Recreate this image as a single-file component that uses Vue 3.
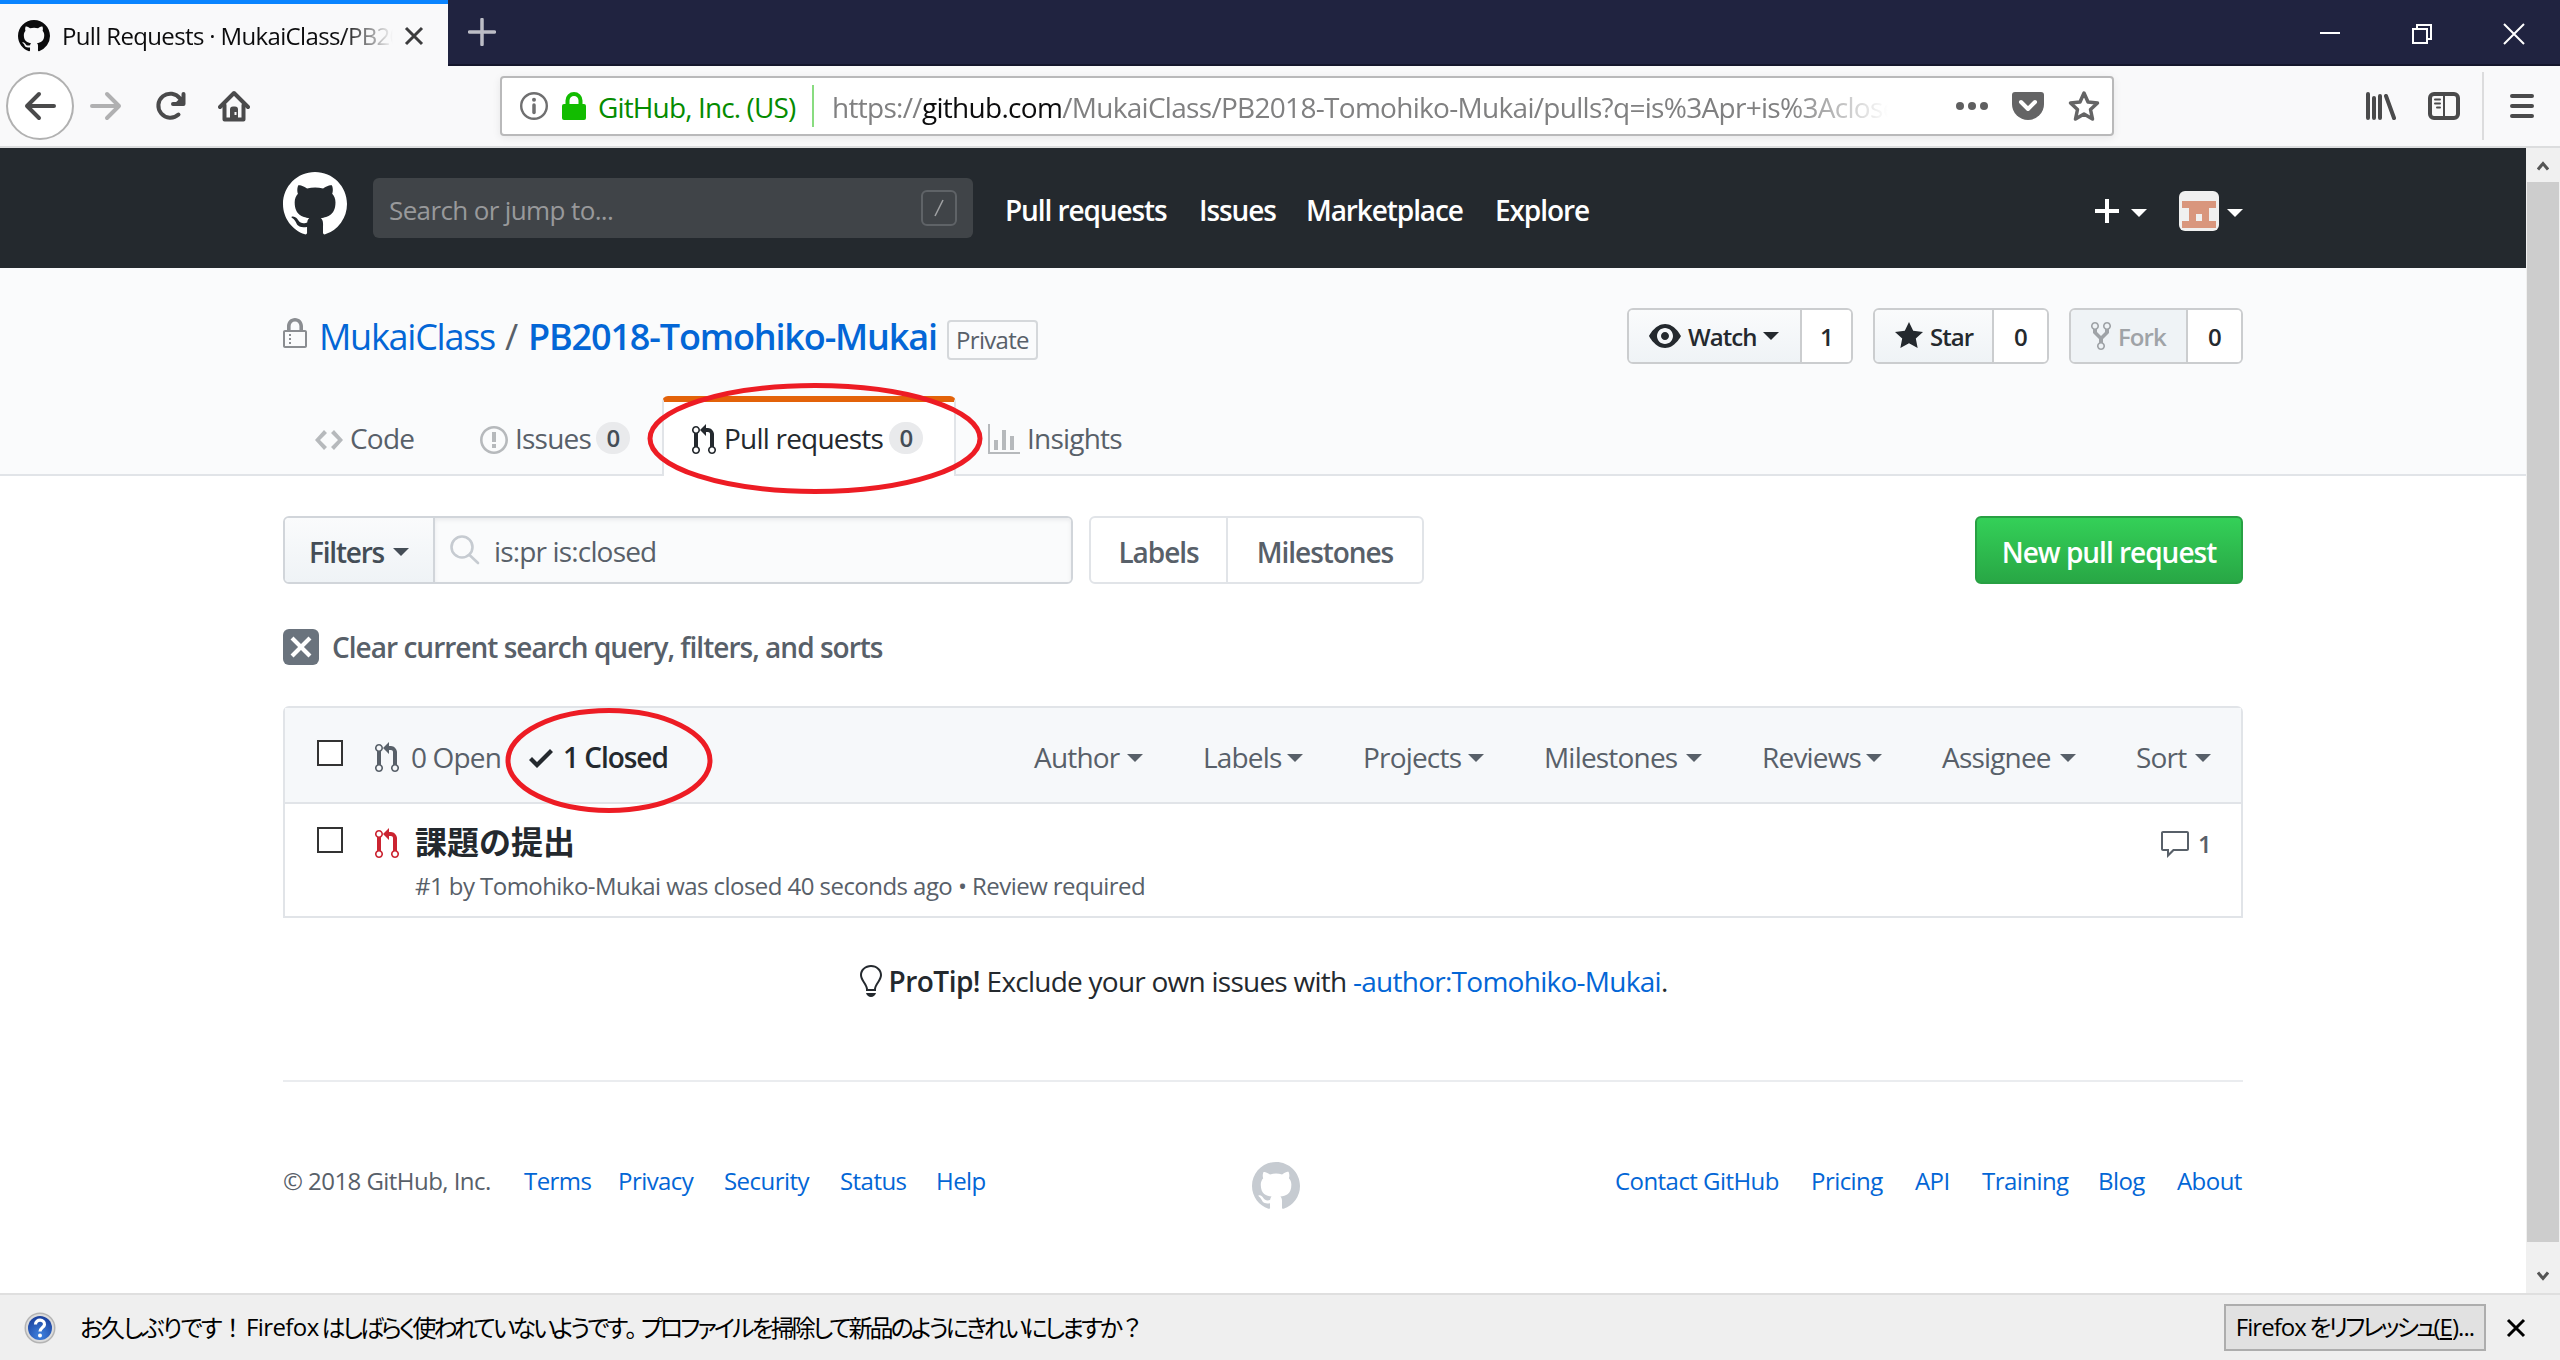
<script setup>
import { h } from 'vue'

const shapes = {
  github: [16, 'M8 0C3.58 0 0 3.58 0 8c0 3.54 2.29 6.53 5.47 7.59.4.07.55-.17.55-.38 0-.19-.01-.82-.01-1.49-2.01.37-2.53-.49-2.69-.94-.09-.23-.48-.94-.82-1.13-.28-.15-.68-.52-.01-.53.63-.01 1.08.58 1.23.82.72 1.21 1.87.87 2.33.66.07-.52.28-.87.51-1.07-1.78-.2-3.64-.89-3.64-3.95 0-.87.31-1.59.82-2.15-.08-.2-.36-1.02.08-2.12 0 0 .67-.21 2.2.82.64-.18 1.32-.27 2-.27.68 0 1.36.09 2 .27 1.53-1.04 2.2-.82 2.2-.82.44 1.1.16 1.92.08 2.12.51.56.82 1.27.82 2.15 0 3.07-1.87 3.75-3.65 3.95.29.25.54.73.54 1.48 0 1.07-.01 1.93-.01 2.2 0 .21.15.46.55.38A8.013 8.013 0 0 0 16 8c0-4.42-3.58-8-8-8z'],
  lock: [12, 'M4 13H3v-1h1v1zm8-6v7c0 .55-.45 1-1 1H1c-.55 0-1-.45-1-1V7c0-.55.45-1 1-1h1V4c0-2.2 1.8-4 4-4s4 1.8 4 4v2h1c.55 0 1 .45 1 1zM3.8 6h4.41V4c0-1.22-.98-2.2-2.2-2.2-1.22 0-2.2.98-2.2 2.2v2H3.8zM11 7H1v7h10V7zM4 8H3v1h1V8zm0 2H3v1h1v-1z'],
  pull: [12, 'M11 11.28V5c-.03-.78-.34-1.47-.94-2.06C9.46 2.35 8.78 2.03 8 2H7V0L4 3l3 3V4h1c.27.02.48.11.69.31.21.2.3.42.31.69v6.28A1.993 1.993 0 0 0 10 15a1.993 1.993 0 0 0 1-3.72zm-1 2.92c-.66 0-1.2-.55-1.2-1.2 0-.65.55-1.2 1.2-1.2.65 0 1.2.55 1.2 1.2 0 .65-.55 1.2-1.2 1.2zM4 3c0-1.11-.89-2-2-2a1.993 1.993 0 0 0-1 3.72v6.56A1.993 1.993 0 0 0 2 15a1.993 1.993 0 0 0 1-3.72V4.720c.59-.34 1-.98 1-1.720zm-.8 10c0 .66-.55 1.2-1.2 1.2-.65 0-1.2-.55-1.2-1.2 0-.65.55-1.2 1.2-1.2.65 0 1.2.55 1.2 1.2zM2 4.2C1.34 4.2.8 3.65.8 3c0-.65.55-1.2 1.2-1.2.65 0 1.2.55 1.2 1.2 0 .65-.55 1.2-1.2 1.2z'],
  eye: [16, 'M8.06 2C3 2 0 8 0 8s3 6 8.06 6C13 14 16 8 16 8s-3-6-7.94-6zM8 12c-2.2 0-4-1.78-4-4 0-2.2 1.8-4 4-4 2.22 0 4 1.8 4 4 0 2.22-1.78 4-4 4zm2-4c0 1.11-.89 2-2 2-1.11 0-2-.89-2-2 0-1.11.89-2 2-2 1.11 0 2 .89 2 2z'],
  star: [14, 'M14 6l-4.9-.64L7 1 4.9 5.36 0 6l3.6 3.26L2.67 14 7 11.67 11.33 14l-.93-4.74L14 6z'],
  fork: [10, 'M8 1a1.993 1.993 0 0 0-1 3.72V6L5 8 3 6V4.72A1.993 1.993 0 0 0 2 1a1.993 1.993 0 0 0-1 3.72V6.5l3 3v1.78A1.993 1.993 0 0 0 5 15a1.993 1.993 0 0 0 1-3.72V9.5l3-3V4.72A1.993 1.993 0 0 0 8 1zM2 4.2C1.34 4.2.8 3.65.8 3c0-.65.55-1.2 1.2-1.2.65 0 1.2.55 1.2 1.2 0 .65-.55 1.2-1.2 1.2zm3 10c-.66 0-1.2-.55-1.2-1.2 0-.65.55-1.2 1.2-1.2.65 0 1.2.55 1.2 1.2 0 .65-.55 1.2-1.2 1.2zm3-10c-.66 0-1.2-.55-1.2-1.2 0-.65.55-1.2 1.2-1.2.65 0 1.2.55 1.2 1.2 0 .65-.55 1.2-1.2 1.2z'],
  code: [14, 'M9.5 3L8 4.5 11.5 8 8 11.5 9.5 13 14 8 9.5 3zm-5 0L0 8l4.5 5L6 11.5 2.5 8 6 4.5 4.5 3z'],
  issue: [14, 'M7 2.3c3.14 0 5.7 2.56 5.7 5.7s-2.56 5.7-5.7 5.7A5.71 5.71 0 0 1 1.3 8c0-3.14 2.56-5.7 5.7-5.7zM7 1C3.14 1 0 4.14 0 8s3.14 7 7 7 7-3.14 7-7-3.14-7-7-7zm1 3H6v5h2V4zm0 6H6v2h2v-2z'],
  graph: [16, 'M16 14v1H0V0h1v14h15zM5 13H3V8h2v5zm4 0H7V3h2v10zm4 0h-2V6h2v7z'],
  check: [12, 'M12 5l-8 8-4-4 1.5-1.5L4 10l6.5-6.5L12 5z'],
  comment: [16, 'M14 1H2c-.55 0-1 .45-1 1v8c0 .55.45 1 1 1h2v3.5L7.5 11H14c.55 0 1-.45 1-1V2c0-.55-.45-1-1-1zm0 9H7l-2 2v-2H2V2h12v8z'],
  bulb: [12, 'M6.5 0C3.48 0 1 2.19 1 5c0 .92.55 2.25 1 3 1.34 2.25 1.78 2.78 2 4v1h5v-1c.22-1.22.66-1.75 2-4 .45-.75 1-2.08 1-3 0-2.81-2.48-5-5.5-5zm3.64 7.48c-.25.44-.47.8-.67 1.11-.86 1.41-1.25 2.06-1.45 3.23-.02.05-.02.11-.02.17H5c0-.06 0-.13-.02-.17-.2-1.17-.59-1.83-1.45-3.23-.2-.31-.42-.67-.67-1.11C2.44 6.78 2 5.65 2 5c0-2.2 2.02-4 4.5-4 1.22 0 2.36.42 3.22 1.19C10.55 2.94 11 3.94 11 5c0 .66-.44 1.78-.86 2.48zM4 14h5c-.23 1.14-1.3 2-2.5 2s-2.27-.86-2.5-2z'],
  x: [12, 'M7.48 8l3.75 3.75-1.48 1.48L6 9.48l-3.75 3.75-1.48-1.48L4.52 8 .77 4.25l1.48-1.48L6 6.52l3.75-3.75 1.48 1.48L7.48 8z'],
  plus: [12, 'M12 9H7v5H5V9H0V7h5V2h2v5h5v2z'],
}

// Octicon at twice its nominal size; `size` is the height in pixels.
const Icon = ({ name, size = 32 }) => {
  const [w, d] = shapes[name]
  return h('svg', { class: 'icon', viewBox: `0 0 ${w} 16`, width: (w * size) / 16, height: size, fill: 'currentColor' }, [
    h('path', { d, 'fill-rule': 'evenodd' }),
  ])
}
Icon.props = ['name', 'size']

const nav = [
  { label: 'Pull requests', w: 162 },
  { label: 'Issues', w: 75 },
  { label: 'Marketplace', w: 157 },
  { label: 'Explore', w: 96 },
]
const sorts = [
  { label: 'Author', w: 85 },
  { label: 'Labels', w: 76 },
  { label: 'Projects', w: 97 },
  { label: 'Milestones', w: 134 },
  { label: 'Reviews', w: 96 },
  { label: 'Assignee', w: 110 },
  { label: 'Sort', w: 51 },
]
const footLeft = [
  { label: 'Terms', w: 62 },
  { label: 'Privacy', w: 74 },
  { label: 'Security', w: 84 },
  { label: 'Status', w: 64 },
  { label: 'Help', w: 49 },
]
const footRight = [
  { label: 'Contact GitHub', w: 164 },
  { label: 'Pricing', w: 72 },
  { label: 'API', w: 35 },
  { label: 'Training', w: 84 },
  { label: 'Blog', w: 47 },
  { label: 'About', w: 66 },
]
</script>

<template>
  <div class="window">
    <header class="tabbar">
      <div class="tab">
        <Icon name="github" :size="32" class="favicon" />
        <span class="tab-title">Pull Requests · MukaiClass/PB20</span>
        <svg class="tab-close" width="20" height="20" viewBox="0 0 20 20"><path d="M2 2l16 16M18 2L2 18" /></svg>
      </div>
      <svg class="new-tab" width="28" height="28" viewBox="0 0 28 28"><path d="M14 1.5v25M1.5 14h25" /></svg>
      <div class="controls">
        <svg width="20" height="20" viewBox="0 0 20 20"><path d="M0 9h20" stroke-width="2" /></svg>
        <svg width="20" height="20" viewBox="0 0 20 20"><path d="M1 5h14v14H1zM5 5V1h14v14h-4" stroke-width="2" /></svg>
        <svg width="20" height="20" viewBox="0 0 20 20"><path d="M0 0l20 20M20 0L0 20" stroke-width="2" /></svg>
      </div>
    </header>

    <div class="toolbar">
      <div class="back">
        <svg width="32" height="32" viewBox="0 0 32 32"><path d="M15 4L3 16l12 12M3 16h27" /></svg>
      </div>
      <svg class="forward" width="32" height="32" viewBox="0 0 32 32"><path d="M17 4l12 12-12 12M29 16H2" /></svg>
      <svg class="reload" width="32" height="32" viewBox="0 0 32 32">
        <path d="M23.500 24.500A12 12 0 1 1 25 8.500" />
        <path d="M28.500 4v10H18" />
        <path d="M28.500 5v9H19z" class="solid" />
      </svg>
      <svg class="home" width="32" height="32" viewBox="0 0 32 32">
        <path d="M2 17L16 3l14 14" />
        <path d="M6.500 15v14.500h19V15" />
        <path d="M12 30V19.500q0-3 3-3h2q3 0 3 3V30zM16.500 22v3h2v-3z" class="solid" fill-rule="evenodd" />
      </svg>
      <div class="urlbar">
        <svg class="info" width="28" height="28" viewBox="0 0 28 28">
          <circle cx="14" cy="14" r="12.800" />
          <path d="M14 13v7.500" stroke-width="3.500" stroke-linecap="round" />
          <circle cx="14" cy="7.800" r="2" class="dot" />
        </svg>
        <svg class="padlock" width="24" height="28" viewBox="0 0 24 28">
          <path d="M5.500 14V8.500a6.500 6.500 0 0 1 13 0V14" />
          <rect x="0" y="12" width="24" height="16" rx="2" />
        </svg>
        <span class="owner">GitHub, Inc. (US)</span>
        <i class="owner-rule"></i>
        <span class="url">https://<b>github.com</b>/MukaiClass/PB2018-Tomohiko-Mukai/pulls?q=is%3Apr+is%3Aclose</span>
        <svg class="dots" width="32" height="10" viewBox="0 0 32 10"><circle cx="4" cy="5" r="4" /><circle cx="16" cy="5" r="4" /><circle cx="28" cy="5" r="4" /></svg>
        <svg class="pocket" width="32" height="28" viewBox="0 0 32 28">
          <path d="M3 0h26q3 0 3 3v9a16 16 0 0 1-32 0V3q0-3 3-3z" />
          <path d="M9 10l7 7 7-7" class="chevron" />
        </svg>
        <svg class="bookmark" width="32" height="32" viewBox="0 0 32 32"><path d="M16 3l4 9 9.500 1-7 6.500 2 9.500-8.500-5-8.500 5 2-9.500-7-6.500 9.500-1z" /></svg>
      </div>
      <svg class="library" width="30" height="28" viewBox="0 0 30 28"><path d="M2 2v24M8 6v20M14 4v22M20 4l8 22" /></svg>
      <svg class="sidebar-icon" width="32" height="28" viewBox="0 0 32 28">
        <rect x="2" y="2" width="28" height="24" rx="4" stroke-width="4" />
        <path d="M16 3v22" stroke-width="2" />
        <path d="M7 7.500h5M7 11.500h5M9 15.500h3" stroke-width="2" />
      </svg>
      <i class="tool-rule"></i>
      <svg class="menu" width="24" height="24" viewBox="0 0 24 24"><path d="M2 2h20M2 12h20M2 22h20" /></svg>
    </div>

    <div class="viewport">
      <main class="page">
        <div class="gh-header">
          <Icon name="github" :size="64" />
          <div class="jump"><span>Search or jump to...</span><kbd><svg width="10" height="18" viewBox="0 0 10 18"><path d="M9 1L1 17" /></svg></kbd></div>
          <nav>
            <a v-for="n in nav" :key="n.label" :style="{ width: n.w + 'px' }">{{ n.label }}</a>
          </nav>
          <Icon name="plus" :size="32" class="add" />
          <i class="caret add-caret"></i>
          <svg class="avatar" width="40" height="40" viewBox="0 0 40 40">
            <rect width="40" height="40" rx="6" fill="#f0f0f0" />
            <path d="M3 10h34v7h-7v13h7v7H3v-7h7V17H3zM17 23v7h6v-7z" fill="#d9967d" fill-rule="evenodd" />
          </svg>
          <i class="caret"></i>
        </div>

        <section class="repo-head">
          <div class="repo-row">
            <Icon name="lock" :size="32" class="repo-lock" />
            <a class="repo-owner">MukaiClass</a>
            <span class="repo-slash">/</span>
            <a class="repo-name">PB2018-Tomohiko-Mukai</a>
            <span class="private">Private</span>
            <div class="social">
              <div class="pair">
                <button class="w173"><Icon name="eye" /><span class="l-watch">Watch</span><i class="caret"></i></button><a class="w51">1</a>
              </div>
              <div class="pair">
                <button class="w119"><Icon name="star" /><span>Star</span></button><a class="w55">0</a>
              </div>
              <div class="pair">
                <button class="w117 off"><Icon name="fork" /><span>Fork</span></button><a class="w55">0</a>
              </div>
            </div>
          </div>
          <div class="tabs">
            <a class="t-code"><Icon name="code" /><span>Code</span></a>
            <a class="t-issues"><Icon name="issue" /><span>Issues</span><em>0</em></a>
            <a class="t-pulls"><Icon name="pull" /><span>Pull requests</span><em>0</em></a>
            <a class="t-insights"><Icon name="graph" /><span>Insights</span></a>
          </div>
        </section>

        <section class="content">
          <div class="filter-row">
            <div class="filter">
              <button>Filters<i class="caret"></i></button>
              <div class="query">
                <svg width="30" height="30" viewBox="0 0 30 30"><circle cx="12" cy="12" r="10.500" /><path d="M19.500 20l8.500 8" /></svg>
                <span>is:pr is:closed</span>
              </div>
            </div>
            <div class="subnav"><a>Labels</a><a>Milestones</a></div>
            <button class="new-pr">New pull request</button>
          </div>

          <a class="clear"><span class="clear-box"><Icon name="x" :size="32" /></span><span>Clear current search query, filters, and sorts</span></a>

          <div class="list">
            <div class="list-head">
              <i class="box"></i>
              <Icon name="pull" /><span class="open">0 Open</span>
              <Icon name="check" class="dark" /><span class="closed">1 Closed</span>
              <div class="sorts">
                <span v-for="s in sorts" :key="s.label" class="sort"><span :style="{ width: s.w + 'px' }">{{ s.label }}</span><i class="caret"></i></span>
              </div>
            </div>
            <div class="item">
              <i class="box"></i>
              <Icon name="pull" class="red" />
              <div class="item-text">
                <a class="title">課題の提出</a>
                <p>#1 by Tomohiko-Mukai was closed 40 seconds ago • Review required</p>
              </div>
              <div class="comments"><Icon name="comment" /><span>1</span></div>
            </div>
          </div>

          <p class="protip"><Icon name="bulb" /><strong>ProTip!</strong> Exclude your own issues with <a>-author:Tomohiko-Mukai</a>.</p>

          <footer>
            <span class="copy">© 2018 GitHub, Inc.</span>
            <a v-for="f in footLeft" :key="f.label" :style="{ width: f.w + 'px' }">{{ f.label }}</a>
            <Icon name="github" :size="48" class="foot-mark" />
            <a v-for="f in footRight" :key="f.label" :style="{ width: f.w + 'px' }">{{ f.label }}</a>
          </footer>
        </section>

        <svg class="rings" width="1100" height="900" viewBox="0 0 1100 900">
          <ellipse cx="815" cy="290.500" rx="165" ry="53" />
          <ellipse cx="609" cy="612.500" rx="101" ry="50" />
        </svg>
      </main>

      <aside class="scrollbar">
        <svg width="12" height="10" viewBox="0 0 12 10"><path d="M1 8.500l5-6 5 6" /></svg>
        <i class="thumb"></i>
        <svg width="12" height="10" viewBox="0 0 12 10"><path d="M1 1.500l5 6 5-6" /></svg>
      </aside>
    </div>

    <div class="notice">
      <svg class="help" width="32" height="32" viewBox="0 0 32 32">
        <defs>
          <radialGradient id="orb" cx=".5" cy=".8" r=".8"><stop offset="0" stop-color="#3f83e0" /><stop offset="1" stop-color="#1a3f9c" /></radialGradient>
        </defs>
        <circle cx="16" cy="16" r="15.500" fill="#b4b4b4" /><circle cx="16" cy="16" r="14" fill="#dcdcdc" />
        <circle cx="16" cy="16" r="12" fill="url(#orb)" />
        <path d="M11.500 12.500c0-6 9.500-5.500 9 0-.3 3-4.500 3.500-4.500 7" fill="none" stroke="#fff" stroke-width="3.200" />
        <circle cx="16" cy="23.500" r="2" fill="#fff" />
      </svg>
      <span class="hello">お久しぶりです<span class="mark">！</span></span>
      <span class="latin">Firefox</span>
      <span class="message">はしばらく使われていないようです<span class="stop">。</span>プロファイルを掃除して新品のようにきれいにしますか<span class="mark">？</span></span>
      <button class="refresh"><span class="latin">Firefox</span> をリフレッシュ<span class="latin">(<u>E</u>)...</span></button>
      <svg class="dismiss" width="20" height="20" viewBox="0 0 20 20"><path d="M2 2l16 16M18 2L2 18" /></svg>
    </div>
  </div>
</template>

<style>
body { margin: 0; overflow: hidden; }
</style>

<style scoped>
* { box-sizing: border-box; }
.window {
  width: 2560px; height: 1360px; display: flex; flex-direction: column; overflow: hidden;
  font-family: "Open Sans", "Noto Sans", "Noto Sans CJK JP", sans-serif;
  font-size: 28px; letter-spacing: -0.025em; white-space: nowrap; color: #24292e; background: #fff;
}
svg { display: block; flex: none; }
p { margin: 0; }
i, em { font-style: normal; }
button { font: inherit; letter-spacing: inherit; color: inherit; padding: 0; cursor: pointer; }
.caret { width: 0; height: 0; flex: none; border: 8px solid transparent; border-top-color: currentColor; border-bottom: 0; }

/* tab strip */
.tabbar { height: 66px; flex: none; display: flex; align-items: center; background: #202340; border-bottom: 2px solid #14162c; }
.tab { width: 448px; height: 66px; margin-bottom: -2px; align-self: flex-start; display: flex; align-items: center; background: #f9f9fa; border-top: 4px solid #0a84ff; color: #0c0c0d; padding: 0 0 0 18px; font-size: 24px; }
.tab-title { width: 336px; margin-left: 12px; letter-spacing: -0.027em; -webkit-mask-image: linear-gradient(90deg, #000 280px, transparent 331px); }
.tab-close { margin-left: 6px; stroke: #3c3c3d; stroke-width: 3; }
.tab svg { margin-top: 2px; }
.new-tab { margin-left: 20px; stroke: #bcbdc6; stroke-width: 3.500; stroke-linecap: round; fill: none; }
.controls { margin: 3px 36px 0 auto; display: flex; gap: 72px; }
.controls svg { stroke: #fff; fill: none; overflow: visible; }

/* navigation toolbar */
.toolbar { height: 82px; flex: none; display: flex; align-items: center; padding-left: 6px; background: #f9f9fa; border-bottom: 2px solid #dcddde; }
.toolbar svg { fill: none; stroke: #4a4a4b; stroke-width: 4; stroke-linecap: round; stroke-linejoin: round; }
.toolbar .solid { fill: #4a4a4b; stroke: none; }
.back { width: 68px; height: 68px; border-radius: 50%; border: 2px solid #b1b1b1; background: #fff; display: flex; align-items: center; justify-content: center; }
.toolbar .forward { margin-left: 16px; stroke: #b0b0b1; }
.reload { margin-left: 33px; }
.home { margin-left: 31px; }
.urlbar { margin-left: 250px; width: 1614px; height: 60px; flex: none; display: flex; align-items: center; background: #fff; border: 2px solid #b9b9ba; border-radius: 4px; padding-left: 18px; box-shadow: 0 2px 8px rgba(0, 0, 0, .08); }
.toolbar .info { stroke: #6f6f70; stroke-width: 2.400; }
.toolbar .dot { fill: #6f6f70; stroke: none; }
.padlock { margin-left: 14px; }
.toolbar .padlock path { stroke: #12bc00; }
.toolbar .padlock rect { fill: #12bc00; stroke: none; }
.owner { width: 198px; margin-left: 12px; color: #058b00; letter-spacing: -0.031em; padding-top: 2px; }
.owner-rule { width: 2px; height: 42px; margin-left: 16px; background: #89dc80; }
.url { width: 1080px; margin-left: 18px; padding-top: 2px; letter-spacing: -0.025em; color: #808081; -webkit-mask-image: linear-gradient(90deg, #000 960px, transparent 1056px); }
.url b { font-weight: 400; color: #0c0c0d; }
.toolbar .dots { margin-left: 44px; fill: #5f5f60; stroke: none; }
.toolbar .pocket { margin-left: 24px; fill: #646465; stroke: none; }
.toolbar .chevron { fill: none; stroke: #fff; stroke-width: 4; }
.toolbar .bookmark { margin-left: 24px; stroke: #646465; stroke-width: 3.500; }
.library { margin-left: 252px; }
.toolbar .sidebar-icon { margin-left: 32px; }
.tool-rule { width: 2px; height: 68px; margin-left: 22px; background: #dcdcdd; }
.menu { margin-left: 26px; overflow: visible; }

.viewport { height: 1145px; flex: none; display: flex; }
.page { width: 2526px; position: relative; }

/* site header */
.gh-header { height: 120px; display: flex; align-items: center; padding: 0 283px; background: #24292e; color: #fff; }
.gh-header > .icon:first-child { margin-top: -8px; }
.jump { width: 600px; height: 60px; margin-left: 26px; padding: 0 16px; display: flex; align-items: center; justify-content: space-between; background: #404448; border-radius: 6px; color: #98999b; font-size: 26px; letter-spacing: -0.024em; }
.jump span { padding-top: 3px; }
kbd { width: 36px; height: 36px; display: flex; align-items: center; justify-content: center; border: 2px solid #5f6367; border-radius: 6px; }
kbd svg { stroke: #a0a2a4; stroke-width: 1.600; }
nav { display: flex; gap: 32px; margin-left: 32px; padding-top: 3px; font-weight: 600; letter-spacing: -0.039em; }
.add { margin-left: auto; margin-top: 6px; }
.add-caret { margin: 10px 32px 0 12px; }
.avatar { margin: 6px 8px 0 0; }
.gh-header > .caret:last-child { margin-top: 10px; }

/* repository header */
.repo-head { height: 208px; background: #fafbfc; border-bottom: 2px solid #e1e4e8; padding: 0 283px; }
.repo-row { height: 128px; padding-top: 40px; display: flex; align-items: flex-start; font-size: 36px; line-height: 57px; }
.repo-lock { color: #8a8d91; margin-top: 10px; }
.repo-owner { width: 178px; margin-left: 12px; color: #0366d6; letter-spacing: -0.035em; }
.repo-slash { margin-left: 8px; width: 23px; color: #586069; }
.repo-name { width: 408px; color: #0366d6; font-weight: 600; letter-spacing: -0.032em; }
.private { width: 91px; height: 40px; margin: 12px 0 0 11px; border: 2px solid #d5d8db; border-radius: 4px; color: #586069; font-size: 24px; line-height: 36px; text-align: center; }
.social { margin-left: auto; display: flex; gap: 20px; font-size: 24px; font-weight: 600; line-height: 53px; letter-spacing: -0.04em; }
.pair { display: flex; height: 56px; border: 2px solid #cbcdcf; border-radius: 6px; overflow: hidden; }
.pair button { display: flex; align-items: center; border: 0; border-right: 2px solid #cbcdcf; padding-left: 20px; background: linear-gradient(#fafbfc, #eff3f6); gap: 7px; }
.pair a { text-align: center; background: #fff; }
.pair .off { background: #eff3f6; color: #9fa3a7; }
.l-watch { width: 68px; }
.w173 { width: 173px; } .w119 { width: 119px; } .w117 { width: 117px; }
.w51 { width: 49px; } .w55 { width: 53px; }
.tabs { height: 80px; display: flex; color: #586069; line-height: 78px; letter-spacing: -0.028em; }
.tabs a { display: flex; align-items: center; height: 80px; padding-top: 4px; }
.tabs span { margin-left: 7px; }
.tabs .icon { margin-top: 3px; color: #b6b9bc; }
.tabs em { width: 34px; height: 32px; margin-left: 8px; border-radius: 20px; background: #e9eaec; color: #444d56; font-size: 24px; font-weight: 600; line-height: 32px; text-align: center; }
.t-code { margin-left: 32px; width: 165px; }
.t-issues { width: 182px; }
.t-issues span { width: 73px; }
.tabs .t-pulls { width: 294px; padding: 0 0 2px 28px; background: #fff; border: 2px solid #e1e4e8; border-top: 6px solid #e36209; border-bottom: 0; border-radius: 6px 6px 0 0; color: #24292e; }
.t-pulls span { width: 157px; margin-left: 8px; }
.tabs .t-pulls .icon { color: #24292e; }
.t-insights { padding-left: 32px; }

/* search filters */
.content { padding: 40px 283px 0; }
.filter-row { height: 68px; display: flex; }
.filter { width: 790px; display: flex; border: 2px solid #d1d5da; border-radius: 6px; overflow: hidden; }
.filter button { width: 150px; display: flex; align-items: center; justify-content: center; gap: 9px; padding-top: 3px; border: 0; border-right: 2px solid #d1d5da; background: linear-gradient(#fafbfc, #eff3f6); color: #444d56; font-weight: 600; letter-spacing: -0.044em; }
.query { flex: 1; display: flex; align-items: center; gap: 14px; padding-left: 15px; background: #fafbfc; color: #586069; box-shadow: inset 0 2px 4px rgba(27, 31, 35, .075); letter-spacing: -0.03em; }
.query svg { fill: none; stroke: #c6cbd1; stroke-width: 2.600; stroke-linecap: round; margin-top: -1px; }
.query span { padding-top: 2px; }
.subnav { width: 335px; margin-left: 16px; display: flex; border: 2px solid #e1e4e8; border-radius: 6px; font-weight: 600; color: #586069; line-height: 68px; text-align: center; letter-spacing: -0.038em; }
.subnav a:first-child { width: 137px; border-right: 2px solid #e1e4e8; }
.subnav a:last-child { flex: 1; }
.new-pr { width: 268px; margin-left: auto; border: 2px solid #28a043; border-radius: 6px; background: linear-gradient(#34d058, #28a745); color: #fff; font-weight: 600; letter-spacing: -0.036em; padding-top: 3px; }
.clear { margin-top: 44px; height: 38px; display: flex; align-items: center; gap: 13px; color: #586069; font-weight: 600; letter-spacing: -0.035em; }
.clear-box { width: 36px; height: 36px; border-radius: 6px; background: #6a737d; color: #fff; display: flex; align-items: center; justify-content: center; }

/* request list */
.list { margin-top: 40px; border: 2px solid #e1e4e8; border-radius: 6px 6px 0 0; }
.list-head { height: 96px; display: flex; align-items: center; padding: 3px 30px 0 32px; background: #f6f8fa; border-bottom: 2px solid #e1e4e8; color: #586069; }
.box { width: 26px; height: 26px; flex: none; margin: -8px 32px 0 0; border: 2px solid #333; background: #fff; }
.open { width: 105px; margin-left: 12px; letter-spacing: -0.03em; }
.list-head .icon { margin-top: 3px; }
.dark { margin-left: 13px; color: #24292e; }
.closed { margin-left: 10px; color: #24292e; font-weight: 600; letter-spacing: -0.037em; }
.sorts { margin-left: auto; display: flex; gap: 60px; letter-spacing: -0.029em; }
.sort { display: flex; align-items: center; gap: 8px; }
.sort .caret { margin-top: 2px; }
.item { height: 112px; display: flex; align-items: flex-start; padding: 23px 30px 0 32px; }
.item .box { margin-top: 0; }
.item .icon { margin-top: 1px; }
.red { color: #cb2431; }
.item-text { margin-left: 16px; }
.title { display: block; margin-top: -9px; height: 48px; font-family: "Noto Sans CJK JP", sans-serif; font-size: 32px; font-weight: 700; line-height: 44px; letter-spacing: 0; }
.item-text p { font-size: 24px; line-height: 40px; color: #586069; letter-spacing: -0.023em; }
.comments { margin-left: auto; display: flex; gap: 7px; color: #586069; font-size: 24px; font-weight: 600; line-height: 34px; }
.comments .icon { margin-top: 2px; }

.protip { height: 40px; margin-top: 43px; display: flex; justify-content: center; align-items: center; white-space: pre; letter-spacing: -0.027em; }
.protip strong { font-weight: 600; margin-left: 6px; letter-spacing: -0.018em; }
.protip a { letter-spacing: -0.026em; }
.protip a, footer a { color: #0366d6; }

footer { margin-top: 79px; height: 160px; border-top: 2px solid #eaecef; display: flex; gap: 32px; padding-top: 79px; font-size: 24px; line-height: 40px; color: #586069; letter-spacing: -0.023em; }
.copy { width: 209px; }
.foot-mark { margin: 1px auto 0 235px; color: #c6cbd1; }

.rings { position: absolute; left: 0; top: 0; fill: none; stroke: #ed1c24; stroke-width: 5; }

.scrollbar { width: 34px; display: flex; flex-direction: column; align-items: center; background: #f0f0f0; padding-top: 13px; }
.scrollbar svg { fill: none; stroke: #555; stroke-width: 3; }
.thumb { width: 32px; height: 1060px; margin: 11px 0 29px; background: #cdcdcd; }

/* notification */
.notice { height: 67px; flex: none; display: flex; align-items: center; background: #efefef; border-top: 2px solid #dfdfdf; padding: 0 34px 0 24px; color: #000; font-size: 24px; }
.notice > span { margin-top: -2px; }
.hello { width: 166px; margin-left: 24px; font-feature-settings: "palt"; letter-spacing: -0.08em; }
.mark { font-feature-settings: normal; letter-spacing: -0.1em; }
.stop { letter-spacing: 0.15em; }
.latin { letter-spacing: -0.025em; }
.message { margin-left: 3px; font-feature-settings: "palt"; letter-spacing: -0.124em; }
.refresh { width: 262px; height: 47px; margin-left: auto; padding-bottom: 4px; border: 2px solid #adadad; background: #e1e1e1; font-feature-settings: "palt"; letter-spacing: -0.12em; }
.refresh .latin { letter-spacing: -0.04em; }
.dismiss { margin-left: 20px; stroke: #000; stroke-width: 3; }
</style>
